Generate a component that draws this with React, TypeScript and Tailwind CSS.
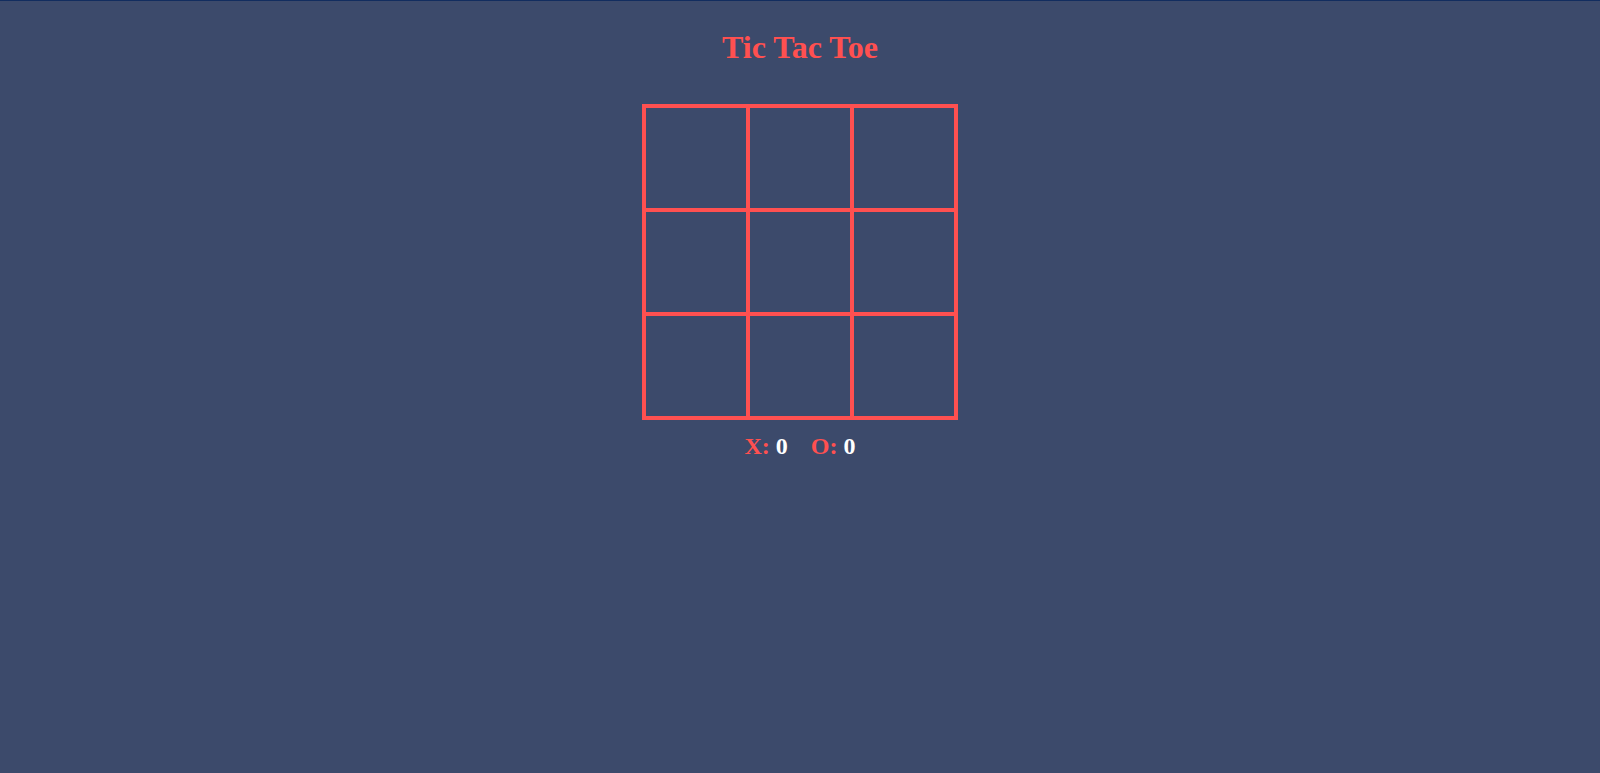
import { useState } from "react";

type Cell = "X" | "O" | null;

const LINES = [
  [0, 1, 2],
  [3, 4, 5],
  [6, 7, 8],
  [0, 3, 6],
  [1, 4, 7],
  [2, 5, 8],
  [0, 4, 8],
  [2, 4, 6],
];

function winnerOf(board: Cell[]): Cell {
  for (const [a, b, c] of LINES) {
    if (board[a] && board[a] === board[b] && board[a] === board[c]) return board[a];
  }
  return null;
}

export default function App() {
  const [board, setBoard] = useState<Cell[]>(Array(9).fill(null));
  const [turn, setTurn] = useState<"X" | "O">("X");
  const [score, setScore] = useState({ X: 0, O: 0 });

  const play = (i: number) => {
    if (board[i]) return;
    const next = board.slice();
    next[i] = turn;
    const win = winnerOf(next);
    if (win) {
      setScore((s) => ({ ...s, [win]: s[win] + 1 }));
      setBoard(Array(9).fill(null));
      setTurn("X");
      return;
    }
    if (next.every(Boolean)) {
      setBoard(Array(9).fill(null));
      setTurn("X");
      return;
    }
    setBoard(next);
    setTurn(turn === "X" ? "O" : "X");
  };

  return (
    <div className="min-h-[773px] border-t border-[#122d5f] bg-[#3c4a6b] font-['Liberation_Serif',serif]">
      <h1 className="pt-[28px] text-center text-[32px] font-bold leading-[36px] text-[#ff5050]">
        Tic Tac Toe
      </h1>

      <div className="mx-auto mt-[39px] grid w-[316px] grid-cols-3 border-2 border-[#ff5050]">
        {board.map((cell, i) => (
          <button
            key={i}
            type="button"
            onClick={() => play(i)}
            className="flex h-[104px] w-[104px] cursor-pointer items-center justify-center border-2 border-[#ff5050] text-[56px] font-bold text-white"
          >
            {cell}
          </button>
        ))}
      </div>

      <div className="mt-[12px] flex justify-center gap-[23px] text-[24px] font-bold leading-[28px]">
        <span>
          <span className="text-[#ff5050]">X:</span>{" "}
          <span className="text-white">{score.X}</span>
        </span>
        <span>
          <span className="text-[#ff5050]">O:</span>{" "}
          <span className="text-white">{score.O}</span>
        </span>
      </div>
    </div>
  );
}
